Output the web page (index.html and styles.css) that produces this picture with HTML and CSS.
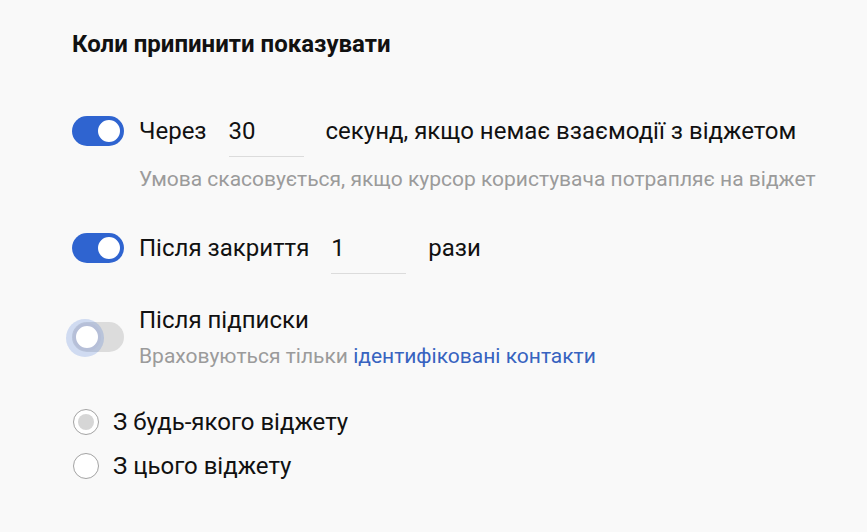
FILE: index.html
```html
<!DOCTYPE html>
<html lang="uk">
<head>
<meta charset="utf-8">
<title>Коли припинити показувати</title>
<link rel="stylesheet" href="styles.css">
</head>
<body>
<main class="panel">
  <h2 class="title">Коли припинити показувати</h2>

  <div class="option option-one">
    <span class="toggle on"><span class="knob"></span></span>
    <div class="body">
      <div class="line">
        <span class="label">Через</span>
        <span class="field">30</span>
        <span class="label">секунд, якщо немає взаємодії з віджетом</span>
      </div>
      <p class="hint">Умова скасовується, якщо курсор користувача потрапляє на віджет</p>
    </div>
  </div>

  <div class="option option-two">
    <span class="toggle on"><span class="knob"></span></span>
    <div class="body">
      <div class="line">
        <span class="label">Після закриття</span>
        <span class="field">1</span>
        <span class="label">рази</span>
      </div>
    </div>
  </div>

  <div class="option option-three">
    <span class="toggle off"><span class="halo"></span><span class="knob"></span></span>
    <div class="body">
      <div class="line"><span class="label">Після підписки</span></div>
      <p class="hint hint-tight">Враховуються тільки <a class="link" href="#">ідентифіковані контакти</a></p>
    </div>
  </div>

  <div class="radios">
    <label class="radio"><span class="dot checked"></span><span class="label">З будь-якого віджету</span></label>
    <label class="radio"><span class="dot"></span><span class="label">З цього віджету</span></label>
  </div>
</main>
</body>
</html>
```

FILE: styles.css
```css
html, body {
  margin: 0;
  padding: 0;
  background: #f9f9f9;
}

body {
  font-family: Roboto, "Liberation Sans", Arial, sans-serif;
  color: #111;
  width: 867px;
  height: 532px;
  overflow: hidden;
}

.panel {
  padding: 30px 0 0 72px;
}

.title {
  margin: 0;
  font-size: 24px;
  line-height: 28px;
  font-weight: 700;
  color: #111;
}

.option {
  display: flex;
  align-items: flex-start;
  gap: 15px;
}

.option-one { margin-top: 58px; }
.option-two { margin-top: 42px; }
.option-three { margin-top: 31px; align-items: center; }

.toggle {
  position: relative;
  flex: none;
  width: 52px;
  height: 30px;
  border-radius: 15px;
}

.toggle.on { background: #2f64d0; }
.toggle.off { background: #dcdcdc; }

.knob {
  position: absolute;
  top: 2px;
  width: 22px;
  height: 22px;
  border-radius: 50%;
  background: #fff;
  border: 2px solid #2f64d0;
}

.toggle.on .knob { left: 24px; }
.toggle.off .knob {
  left: 1px;
  top: 1px;
  width: 22px;
  height: 22px;
  border: 3px solid #b6bfd8;
}

.halo {
  position: absolute;
  left: -6px;
  top: -3px;
  width: 38px;
  height: 38px;
  border-radius: 50%;
  background: rgba(47, 100, 208, 0.2);
}

.body {
  display: flex;
  flex-direction: column;
}

.line {
  display: flex;
  align-items: flex-start;
  gap: 22px;
}

.label {
  font-size: 24px;
  line-height: 30px;
  white-space: nowrap;
}

.field {
  width: 75px;
  height: 30px;
  padding-bottom: 10px;
  border-bottom: 1px solid #dcdcdc;
  font-size: 24px;
  line-height: 30px;
}

.hint {
  margin: 10px 0 0;
  font-size: 21px;
  line-height: 24px;
  color: #9b9b9b;
  white-space: nowrap;
}

.hint-tight { margin-top: 9px; }

.link {
  color: #3763c0;
  text-decoration: none;
}

.radios {
  margin-top: 39px;
  display: flex;
  flex-direction: column;
  gap: 14px;
}

.radio {
  display: flex;
  align-items: center;
  gap: 14px;
}

.dot {
  flex: none;
  width: 24px;
  height: 24px;
  margin-left: 1px;
  border: 1px solid #a3a3a3;
  border-radius: 50%;
  background: #fff;
  display: flex;
  align-items: center;
  justify-content: center;
}

.dot.checked::after {
  content: "";
  width: 16px;
  height: 16px;
  border-radius: 50%;
  background: #d6d6d6;
}
```
